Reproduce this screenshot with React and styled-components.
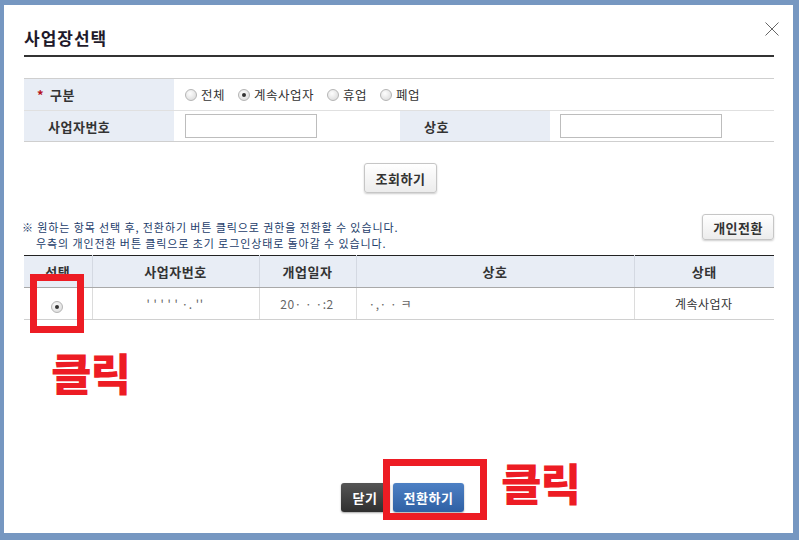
import styled, { createGlobalStyle } from "styled-components";

const GlobalStyle = createGlobalStyle`
  html, body {
    margin: 0;
    padding: 0;
    background: #7697c1;
  }
  body {
    font-family: "Noto Sans CJK KR", "Noto Sans", sans-serif;
    color: #333;
  }
  * { box-sizing: border-box; }
`;

const Screen = styled.div`
  width: 799px;
  height: 540px;
  padding: 5px 6px 7px 4px;
  overflow: hidden;
`;

const Panel = styled.div`
  position: relative;
  height: 528px;
  background: #fff;
  padding: 0 19px 0 20px;
  display: flex;
  flex-direction: column;
`;

const Header = styled.div`
  display: flex;
  align-items: center;
  justify-content: space-between;
  padding: 20px 0 5px;
  border-bottom: 2px solid #333;
`;

const Title = styled.h1`
  margin: 0;
  font-size: 17px;
  line-height: 25px;
  font-weight: 700;
  color: #1f1a2b;
  letter-spacing: 1px;
`;

const CloseButton = styled.button`
  position: absolute;
  top: 16px;
  right: 13px;
  width: 16px;
  height: 16px;
  padding: 0;
  border: 0;
  background: none;
  cursor: pointer;
`;

const SearchGrid = styled.div`
  margin-top: 21px;
  display: grid;
  grid-template-columns: 150px 226px 150px 1fr;
  border-top: 1px solid #cfcfcf;
  border-bottom: 1px solid #cfcfcf;
`;

const LabelCell = styled.div`
  background: #e8edf5;
  height: ${(p) => p.$h}px;
  display: flex;
  align-items: center;
  padding-left: ${(p) => (p.$star ? 13 : 24)}px;
  font-size: 13px;
  font-weight: 700;
  color: #333;
  letter-spacing: 0.5px;
  border-top: ${(p) => (p.$first ? "none" : "1px solid #e0e0e0")};
`;

const Star = styled.span`
  color: #b5121b;
  margin-right: 6px;
  font-size: 13px;
`;

const ValueCell = styled.div`
  grid-column: ${(p) => p.$span || "auto"};
  height: ${(p) => p.$h}px;
  display: flex;
  align-items: center;
  padding-left: ${(p) => p.$pl || 11}px;
  border-top: ${(p) => (p.$first ? "none" : "1px solid #e0e0e0")};
`;

const RadioGroup = styled.div`
  display: flex;
  align-items: center;
  gap: 13px;
  font-size: 12.5px;
  color: #333;
  letter-spacing: 0.5px;
`;

const RadioLabel = styled.label`
  display: flex;
  align-items: center;
  gap: 4px;
`;

const RadioDot = styled.span`
  width: 12px;
  height: 12px;
  border-radius: 50%;
  border: 1px solid #b5b5b5;
  background: radial-gradient(circle at 40% 35%, #fdfdfd, #d6d6d6);
  display: inline-flex;
  align-items: center;
  justify-content: center;
  &::after {
    content: "";
    width: 4px;
    height: 4px;
    border-radius: 50%;
    background: ${(p) => (p.$on ? "#333" : "transparent")};
  }
`;

const TextInput = styled.input`
  width: ${(p) => p.$w}px;
  height: 24px;
  border: 1px solid #bdbdbd;
  outline: none;
  padding: 0 4px;
`;

const SearchRow = styled.div`
  margin-top: 21px;
  display: flex;
  justify-content: center;
  padding-left: 3px;
`;

const LightButton = styled.button`
  height: ${(p) => p.$h || 30}px;
  padding: 0 ${(p) => p.$px || 11}px;
  border: 1px solid #c6c6c6;
  border-radius: 3px;
  background: linear-gradient(#ffffff, #ececec);
  box-shadow: 0 1px 2px rgba(0, 0, 0, 0.2);
  font-family: inherit;
  font-size: 13px;
  font-weight: 700;
  color: #333;
  letter-spacing: 0.5px;
  cursor: pointer;
`;

const NoticeRow = styled.div`
  margin-top: 21px;
  display: flex;
  justify-content: space-between;
  align-items: flex-start;
`;

const Notice = styled.div`
  margin-top: 5px;
  margin-left: -2px;
  font-size: 11px;
  line-height: 16px;
  color: #1c3c6a;
  letter-spacing: 0.9px;
`;

const NoticeLine = styled.div`
  padding-left: ${(p) => (p.$indent ? 14 : 0)}px;
  white-space: nowrap;
`;

const ResultTable = styled.table`
  margin-top: 4px;
  width: 100%;
  border-collapse: collapse;
  border-top: 1px solid #222;
  table-layout: fixed;
`;

const Th = styled.th`
  height: 32px;
  background: #e8edf5;
  font-size: 13px;
  font-weight: 700;
  color: #333;
  border-bottom: 1px solid #a9a9a9;
  border-left: ${(p) => (p.$first ? "none" : "1px solid #d4d9e2")};
  letter-spacing: 0.5px;
`;

const Td = styled.td`
  height: 32px;
  font-size: 12px;
  color: ${(p) => (p.$faint ? "#666" : "#333")};
  text-align: ${(p) => p.$align || "center"};
  padding-left: ${(p) => p.$pl || 0}px;
  border-bottom: 1px solid #d0d0d0;
  border-left: ${(p) => (p.$first ? "none" : "1px solid #dcdcdc")};
  letter-spacing: 0.5px;
`;

const Footer = styled.div`
  margin-top: auto;
  padding: 0 0 21px 7px;
  display: flex;
  justify-content: center;
  gap: 3px;
`;

const SolidButton = styled.button`
  height: 29px;
  padding: 0 ${(p) => p.$px}px;
  border: 0;
  border-radius: 3px;
  background: ${(p) =>
    p.$tone === "blue"
      ? "linear-gradient(#4d80c4, #2f60a4)"
      : "linear-gradient(#555, #2f2f2f)"};
  box-shadow: 0 1px 2px rgba(0, 0, 0, 0.35);
  color: #fff;
  font-family: inherit;
  font-size: 13px;
  font-weight: 700;
  letter-spacing: 0.5px;
  cursor: pointer;
`;

const Highlight = styled.div`
  position: absolute;
  left: ${(p) => p.$x}px;
  top: ${(p) => p.$y}px;
  width: ${(p) => p.$w}px;
  height: ${(p) => p.$h}px;
  border: 7px solid #ed1c24;
  pointer-events: none;
`;

const ClickMark = styled.div`
  position: absolute;
  left: ${(p) => p.$x}px;
  top: ${(p) => p.$y}px;
  font-size: 44px;
  line-height: 1;
  font-weight: 900;
  color: #ed1c24;
  letter-spacing: -1px;
  pointer-events: none;
`;

const options = [
  { label: "전체", on: false },
  { label: "계속사업자", on: true },
  { label: "휴업", on: false },
  { label: "폐업", on: false },
];

export default function App() {
  return (
    <>
      <GlobalStyle />
      <Screen>
        <Panel>
          <Header>
            <Title>사업장선택</Title>
          </Header>
          <CloseButton aria-label="닫기">
            <svg width="16" height="16" viewBox="0 0 16 16">
              <path d="M1.5 1.5 L14.5 14.5 M14.5 1.5 L1.5 14.5" stroke="#666" strokeWidth="1" fill="none" />
            </svg>
          </CloseButton>

          <SearchGrid>
            <LabelCell $h={31} $star $first>
              <Star>*</Star>구분
            </LabelCell>
            <ValueCell $h={31} $span="2 / 5" $first>
              <RadioGroup>
                {options.map((o) => (
                  <RadioLabel key={o.label}>
                    <RadioDot $on={o.on} />
                    {o.label}
                  </RadioLabel>
                ))}
              </RadioGroup>
            </ValueCell>
            <LabelCell $h={31}>사업자번호</LabelCell>
            <ValueCell $h={31}>
              <TextInput $w={132} />
            </ValueCell>
            <LabelCell $h={31}>상호</LabelCell>
            <ValueCell $h={31} $pl={10}>
              <TextInput $w={162} />
            </ValueCell>
          </SearchGrid>

          <SearchRow>
            <LightButton>조회하기</LightButton>
          </SearchRow>

          <NoticeRow>
            <Notice>
              <NoticeLine>※ 원하는 항목 선택 후, 전환하기 버튼 클릭으로 권한을 전환할 수 있습니다.</NoticeLine>
              <NoticeLine $indent>우측의 개인전환 버튼 클릭으로 초기 로그인상태로 돌아갈 수 있습니다.</NoticeLine>
            </Notice>
            <LightButton $h={26} $px={10}>개인전환</LightButton>
          </NoticeRow>

          <ResultTable>
            <colgroup>
              <col style={{ width: 68 }} />
              <col style={{ width: 167 }} />
              <col style={{ width: 97 }} />
              <col style={{ width: 278 }} />
              <col />
            </colgroup>
            <thead>
              <tr>
                <Th $first>선택</Th>
                <Th>사업자번호</Th>
                <Th>개업일자</Th>
                <Th>상호</Th>
                <Th>상태</Th>
              </tr>
            </thead>
            <tbody>
              <tr>
                <Td $first>
                  <RadioDot $on />
                </Td>
                <Td $faint>' ' ' ' '  ·.  ''</Td>
                <Td $faint>20·  ·  ·:2</Td>
                <Td $faint $align="left" $pl={12}>·,·  ·  ㅋ</Td>
                <Td>계속사업자</Td>
              </tr>
            </tbody>
          </ResultTable>

          <Footer>
            <SolidButton $px={12}>닫기</SolidButton>
            <SolidButton $tone="blue" $px={11}>전환하기</SolidButton>
          </Footer>

          <Highlight $x={26} $y={269} $w={54} $h={59} />
          <ClickMark $x={47} $y={345}>클릭</ClickMark>
          <Highlight $x={379} $y={454} $w={104} $h={61} />
          <ClickMark $x={497} $y={455}>클릭</ClickMark>
        </Panel>
      </Screen>
    </>
  );
}
